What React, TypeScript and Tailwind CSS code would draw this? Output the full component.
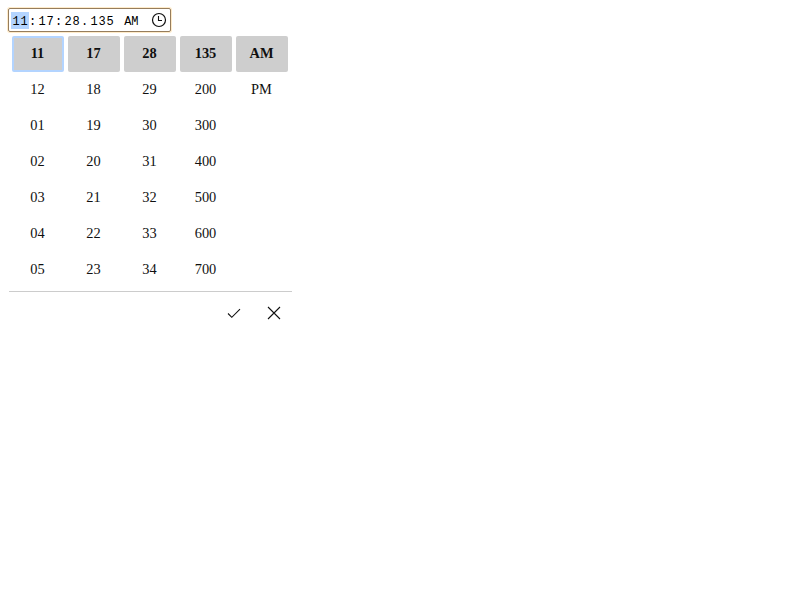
const columns: string[][] = [
  ['11', '12', '01', '02', '03', '04', '05'],
  ['17', '18', '19', '20', '21', '22', '23'],
  ['28', '29', '30', '31', '32', '33', '34'],
  ['135', '200', '300', '400', '500', '600', '700'],
  ['AM', 'PM'],
];

function cellClass(column: number, row: number) {
  const base = 'flex h-9 items-center justify-center rounded-[2px]';
  if (row !== 0) return `${base} pr-px`;
  return column === 0
    ? `${base} border-2 border-[#b3d4ff] bg-[#cecece] pr-px font-bold`
    : `${base} bg-[#cecece] pr-px font-bold`;
}

export default function App() {
  return (
    <main className="p-2 text-[#101010]">
      <div className="flex h-6 w-[163px] items-center rounded-[2px] border border-[#967d5c] pl-[2px] pr-[3px] font-['Liberation_Mono',monospace] text-[12px] leading-[14px] tracking-[0.8px] whitespace-pre text-black shadow-[0_0_0_1px_#ffebc9]">
        <span className="bg-[#b3d4ff] pt-[3px] pl-[1.5px] pr-[0.5px]">11</span>
        <span className="pt-[3px]">:</span>
        <span className="pt-[3px] pl-[1.5px] pr-[0.5px]">17</span>
        <span className="pt-[3px]">:</span>
        <span className="pt-[3px] pl-[1.5px] pr-[0.5px]">28</span>
        <span className="pt-[3px]">.</span>
        <span className="pt-[3px] pl-[1.5px] pr-[0.5px]">135</span>
        <span className="pt-[3px]"> </span>
        <span className="px-px pt-[3px] tracking-[-0.2px]">AM</span>
        <svg className="ml-auto shrink-0" width="16" height="16" viewBox="0 0 16 16" fill="none" stroke="#101010" strokeWidth="1.2">
          <circle cx="8" cy="8" r="6.5" />
          <path d="M7.5 4V8.5H11" strokeWidth="1.1" />
        </svg>
      </div>
      <div className="mt-1 w-[284px]">
        <div className="ml-px flex h-[256px] gap-1 border-b border-[#ccc] pl-[3px] font-['Liberation_Serif',serif] text-[14.4px]">
          {columns.map((column, c) => (
            <div key={c} className="flex w-[52px] shrink-0 flex-col">
              {column.map((label, r) => (
                <div key={label} className={cellClass(c, r)}>
                  {label}
                </div>
              ))}
            </div>
          ))}
        </div>
        <div className="flex h-[42px] items-center justify-end gap-6 pr-[10px]">
          <svg width="16" height="16" viewBox="0 0 16 16" fill="none" stroke="#101010" strokeWidth="1.1">
            <path d="M2 8.5L5.8 12.3L14 4.1" />
          </svg>
          <svg width="16" height="16" viewBox="0 0 16 16" fill="none" stroke="#101010" strokeWidth="1.1">
            <path d="M2 2L14 14M14 2L2 14" />
          </svg>
        </div>
      </div>
    </main>
  );
}
